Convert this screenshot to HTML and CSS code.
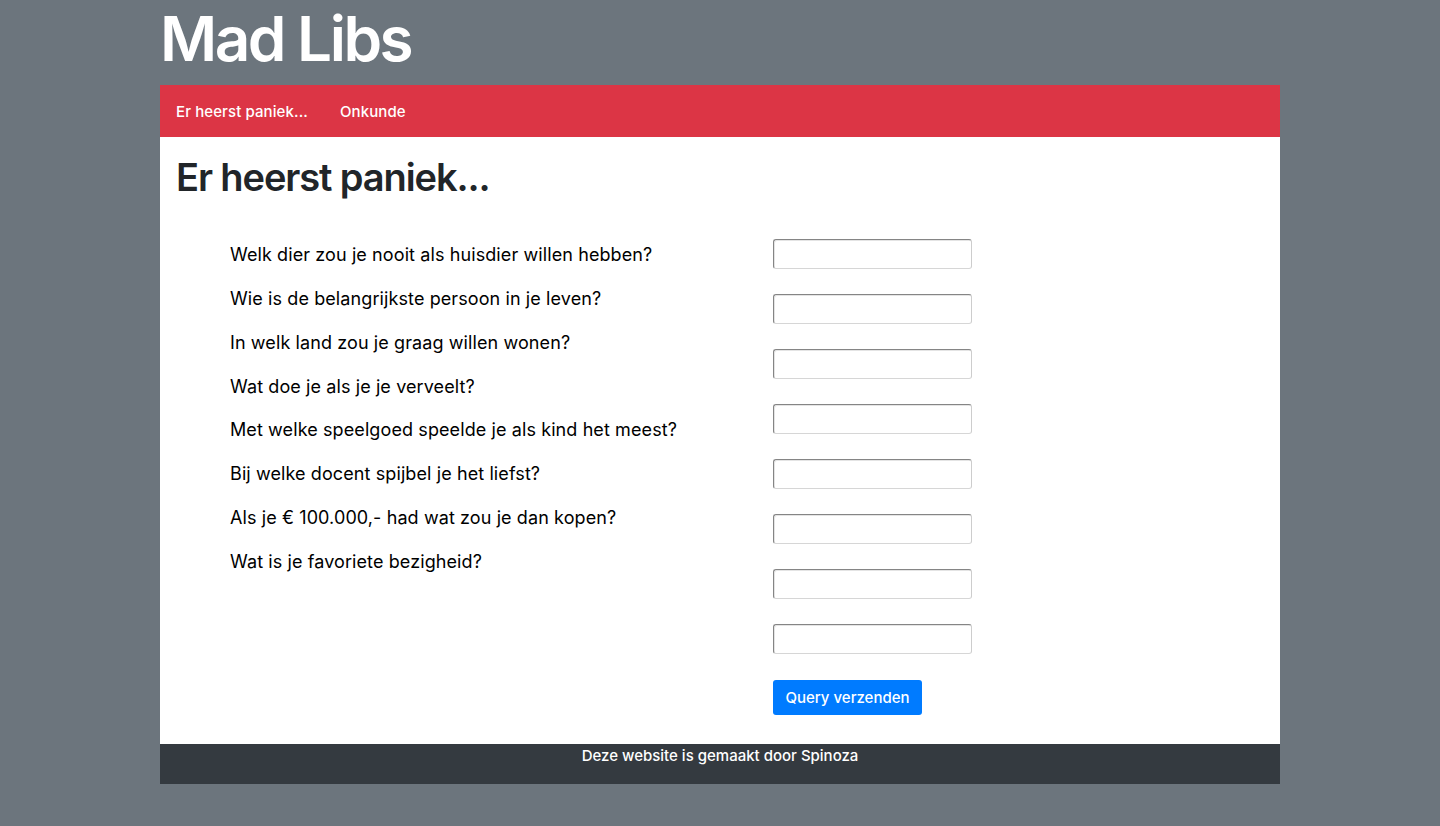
FILE: index.html
```html
<!DOCTYPE html>
<html lang="nl">
<head>
<meta charset="utf-8">
<title>Mad Libs</title>
<link rel="stylesheet" href="styles.css">
</head>
<body>
<div class="container">
  <h1 class="site-title">Mad Libs</h1>
  <nav class="topnav">
    <a class="nav-link" href="#">Er heerst paniek...</a>
    <a class="nav-link" href="#">Onkunde</a>
  </nav>
  <main class="content">
    <h2 class="page-title">Er heerst paniek...</h2>
    <form class="madlib-form">
      <div class="questions">
        <p class="question">Welk dier zou je nooit als huisdier willen hebben?</p>
        <p class="question">Wie is de belangrijkste persoon in je leven?</p>
        <p class="question">In welk land zou je graag willen wonen?</p>
        <p class="question">Wat doe je als je je verveelt?</p>
        <p class="question">Met welke speelgoed speelde je als kind het meest?</p>
        <p class="question">Bij welke docent spijbel je het liefst?</p>
        <p class="question">Als je € 100.000,- had wat zou je dan kopen?</p>
        <p class="question">Wat is je favoriete bezigheid?</p>
      </div>
      <div class="answers">
        <input class="answer" type="text">
        <input class="answer" type="text">
        <input class="answer" type="text">
        <input class="answer" type="text">
        <input class="answer" type="text">
        <input class="answer" type="text">
        <input class="answer" type="text">
        <input class="answer" type="text">
        <button class="submit" type="submit">Query verzenden</button>
      </div>
    </form>
  </main>
  <footer class="footer">Deze website is gemaakt door Spinoza</footer>
</div>
</body>
</html>
```
FILE: styles.css
```css
html, body {
  margin: 0;
  padding: 0;
}
body {
  background: #6c757d;
  font-family: Inter, "Noto Sans", "Liberation Sans", sans-serif;
  color: #212529;
  min-height: 826px;
}
.container {
  width: 1120px;
  margin: 0 auto;
}
.site-title {
  margin: 0 0 8px 0;
  font-size: 62px;
  line-height: 77px;
  font-weight: 600;
  color: #fff;
  letter-spacing: -2.5px;
}
.topnav {
  background: #dc3545;
  height: 52px;
  display: flex;
  align-items: center;
}
.nav-link {
  color: #fff;
  text-decoration: none;
  font-size: 15px;
  font-weight: 500;
  padding: 0 16px;
  letter-spacing: 0.1px;
}
.content {
  background: #fff;
  padding: 16px 16px 29px 16px;
}
.page-title {
  margin: 0;
  font-size: 38px;
  line-height: 48px;
  font-weight: 600;
  color: #212529;
  letter-spacing: -1.1px;
}
.madlib-form {
  display: grid;
  grid-template-columns: 543px auto;
  padding-left: 54px;
  margin-top: 38px;
}
.questions {
  padding-top: 2px;
}
.question {
  margin: 0;
  height: 43.86px;
  line-height: 28px;
  font-size: 18px;
  letter-spacing: 0.1px;
  color: #000;
}
.answers {
  display: flex;
  flex-direction: column;
  align-items: flex-start;
}
.answer {
  width: 199px;
  height: 30px;
  box-sizing: border-box;
  margin: 0 0 25px 0;
  border: 1px solid;
  border-color: #858585 #cdcdcd #d6d6d6 #858585;
  box-shadow: inset 1px 1px 0 #e4e4e4;
  border-radius: 3px;
  background: #fff;
}
.submit {
  margin-top: 1px;
  background: #007bff;
  color: #fff;
  border: none;
  border-radius: 3px;
  height: 35px;
  width: 149px;
  font-family: inherit;
  font-size: 15px;
  font-weight: 500;
}
.footer {
  background: #343a40;
  color: #fff;
  text-align: center;
  height: 40px;
  line-height: 24px;
  font-size: 15px;
  font-weight: 500;
}
```
